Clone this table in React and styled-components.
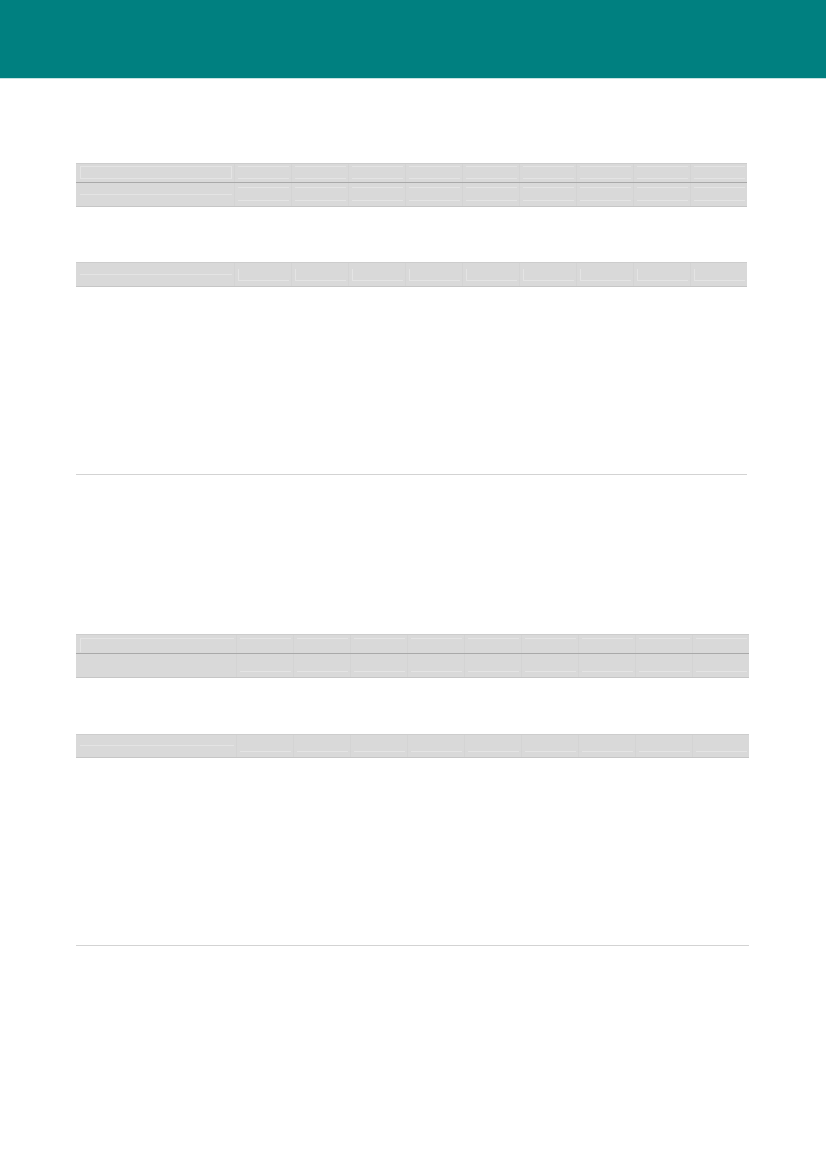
import { createGlobalStyle, styled } from 'styled-components'

const GlobalStyle = createGlobalStyle`
  html, body {
    margin: 0;
    padding: 0;
    background: #ffffff;
    font-family: "Liberation Sans", Arial, sans-serif;
  }
`

const Page = styled.div`
  width: 826px;
  height: 1169px;
  background: #ffffff;
  overflow: hidden;
`

const Header = styled.header`
  height: 78px;
  background-color: #008080;
  border-bottom: 1px solid #c4e2e2;
`

const Content = styled.main`
  padding: 84px 0 0 76px;
  display: flex;
  flex-direction: column;
  align-items: flex-start;
`

const Table = styled.div`
  display: grid;
  grid-template-columns: ${({ $first }) => $first}px repeat(9, 57px);
  margin-top: ${({ $mt }) => $mt || 0}px;
  border-top: 1px solid #cdcdcd;
  border-bottom: 1px solid #c6c6c6;
  background-color: #d9d9d9;
`

const Divider = styled.div`
  grid-column: 1 / -1;
  height: 1px;
  background-color: #a9a9a9;
`

const Cell = styled.div`
  height: ${({ $h }) => $h}px;
  padding: 0 2px 0 3px;
  border-left: 1px solid ${({ $first }) => ($first ? 'transparent' : '#d4d4d4')};
  box-sizing: border-box;
`

const Mark = styled.div`
  margin-top: ${({ $mt }) => $mt}px;
  height: ${({ $h }) => $h}px;
  box-sizing: border-box;
  border-top: ${({ $sides }) => ($sides.includes('t') ? '1px solid #e4e4e4' : 'none')};
  border-bottom: ${({ $sides }) => ($sides.includes('b') ? '1px solid #e4e4e4' : 'none')};
  border-left: ${({ $sides }) => ($sides.includes('l') ? '1px solid #e4e4e4' : 'none')};
  border-right: ${({ $sides }) => ($sides.includes('r') ? '1px solid #e4e4e4' : 'none')};
`

const Body = styled.div`
  height: ${({ $h }) => $h}px;
  border-bottom: 1px solid #d3d3d3;
  width: ${({ $w }) => $w}px;
`

const cols = Array.from({ length: 9 })

const Row = ({ h, first, rest }) => (
  <>
    <Cell $first $h={h}>
      <Mark $mt={first.mt} $h={first.h} $sides={first.sides} />
    </Cell>
    {cols.map((_, i) => (
      <Cell key={i} $h={h}>
        <Mark $mt={rest.mt} $h={rest.h} $sides={rest.sides} />
      </Cell>
    ))}
  </>
)

const Block = ({ top, first, bodyH, width }) => (
  <>
    <Table $first={first} $mt={top.mt}>
      <Row h={top.h1} first={top.a1} rest={top.b1} />
      <Divider />
      <Row h={top.h2} first={top.a2} rest={top.b2} />
    </Table>
    <Table $first={first} $mt={top.gap}>
      <Row h={top.h3} first={top.a3} rest={top.b3} />
    </Table>
    <Body $h={bodyH} $w={width} />
  </>
)

export default function App() {
  return (
    <Page>
      <GlobalStyle />
      <Header />
      <Content>
        <Block
          first={158}
          width={671}
          bodyH={187}
          top={{
            mt: 0,
            h1: 18, a1: { mt: 2, h: 13, sides: 'tblr' }, b1: { mt: 2, h: 13, sides: 'tb' },
            h2: 23, a2: { mt: 10, h: 2, sides: 'b' }, b2: { mt: 4, h: 14, sides: 'tb' },
            gap: 55,
            h3: 23, a3: { mt: 10, h: 2, sides: 'b' }, b3: { mt: 6, h: 12, sides: 'lb' },
          }}
        />
        <Block
          first={160}
          width={673}
          bodyH={187}
          top={{
            mt: 159,
            h1: 18, a1: { mt: 3, h: 14, sides: 'tl' }, b1: { mt: 3, h: 2, sides: 't' },
            h2: 23, a2: { mt: 0, h: 0, sides: '' }, b2: { mt: 16, h: 2, sides: 'b' },
            gap: 56,
            h3: 22, a3: { mt: 9, h: 2, sides: 'b' }, b3: { mt: 15, h: 2, sides: 'b' },
          }}
        />
      </Content>
    </Page>
  )
}
